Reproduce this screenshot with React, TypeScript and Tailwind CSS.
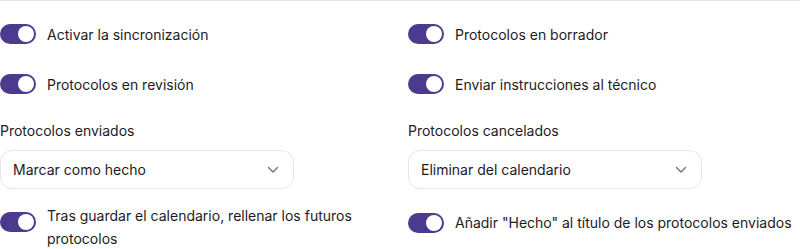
import React from "react";

function Toggle({ className = "" }: { className?: string }) {
  return (
    <div className={"relative h-[20px] w-[36px] shrink-0 rounded-full bg-[#4b3a8e] " + className}>
      <div className="absolute right-[2px] top-[2px] h-[16px] w-[16px] rounded-full bg-white" />
    </div>
  );
}

function ToggleRow({ label }: { label: string }) {
  return (
    <div className="flex items-center gap-[11px]">
      <Toggle />
      <span className="text-[14px] leading-[23px] text-[#1c1b1f]">{label}</span>
    </div>
  );
}

function Chevron() {
  return (
    <svg width="12" height="8" viewBox="0 0 12 8" fill="none">
      <path d="M1.5 1.5 L6 6 L10.5 1.5" stroke="#6b6b6b" strokeWidth="1.2" strokeLinecap="round" strokeLinejoin="round" />
    </svg>
  );
}

function SelectField({ label, value }: { label: string; value: string }) {
  return (
    <div className="flex flex-col">
      <div className="h-[24px] text-[14px] leading-[23px] text-[#1c1b1f]">{label}</div>
      <div className="mt-[7px] flex h-[39px] w-[294px] items-center justify-between rounded-[12px] border border-[#e6e6e6] bg-white pl-[12px] pr-[14px]">
        <span className="text-[14px] text-[#1c1b1f]">{value}</span>
        <Chevron />
      </div>
    </div>
  );
}

export default function App() {
  return (
    <div
      className="h-[249px] w-[800px] overflow-hidden border-t border-[#e3e3e3] bg-white"
      style={{ fontFamily: "Inter, 'Noto Sans', sans-serif" }}
    >
      <div className="grid grid-cols-[408px_1fr] pt-[21px]">
        <div className="flex h-[24px] items-center"><ToggleRow label="Activar la sincronización" /></div>
        <div className="flex h-[24px] items-center"><ToggleRow label="Protocolos en borrador" /></div>
        <div className="mt-[26px] flex h-[24px] items-center"><ToggleRow label="Protocolos en revisión" /></div>
        <div className="mt-[26px] flex h-[24px] items-center"><ToggleRow label="Enviar instrucciones al técnico" /></div>
        <div className="mt-[23px]"><SelectField label="Protocolos enviados" value="Marcar como hecho" /></div>
        <div className="mt-[23px]"><SelectField label="Protocolos cancelados" value="Eliminar del calendario" /></div>
        <div className="mt-[15px] flex w-[380px] items-start gap-[11px]">
          <Toggle className="mt-[8px]" />
          <span className="text-[14px] leading-[23px] text-[#1c1b1f]">
            Tras guardar el calendario, rellenar los futuros protocolos
          </span>
        </div>
        <div className="mt-[15px] pt-[7px]">
          <ToggleRow label={'Añadir "Hecho" al título de los protocolos enviados'} />
        </div>
      </div>
    </div>
  );
}
